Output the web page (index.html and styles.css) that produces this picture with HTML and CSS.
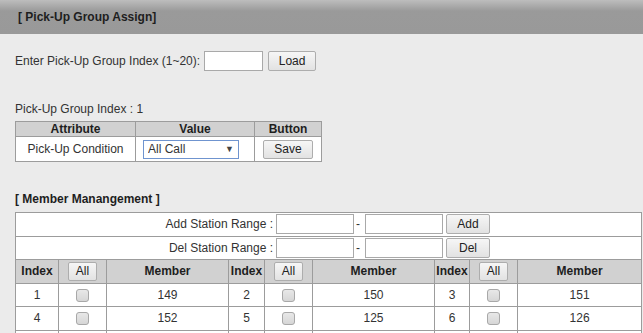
FILE: index.html
```html
<!DOCTYPE html>
<html lang="en">
<head>
    <meta charset="UTF-8">
    <title>Pick-Up Group Assign</title>
    <link rel="stylesheet" href="styles.css">
</head>
<body>
    <div class="title-bar">[ Pick-Up Group Assign]</div>

    <div class="content">
        <div class="load-row">
            <span>Enter Pick-Up Group Index (1~20):</span>
            <input type="text" class="index-input">
            <button class="btn load-btn">Load</button>
        </div>

        <div class="group-label">Pick-Up Group Index : 1</div>
        <table class="grid attr-table">
            <colgroup>
                <col style="width:120px">
                <col style="width:119px">
                <col style="width:67px">
            </colgroup>
            <tr>
                <th>Attribute</th>
                <th>Value</th>
                <th>Button</th>
            </tr>
            <tr>
                <td>Pick-Up Condition</td>
                <td>
                    <div class="select-wrap">
                        <select>
                            <option>All Call</option>
                            <option>Group Call</option>
                        </select>
                    </div>
                </td>
                <td><button class="btn save-btn">Save</button></td>
            </tr>
        </table>

        <div class="section-title">[ Member Manangement ]</div>
        <table class="grid member-table">
            <colgroup>
                <col style="width:43px">
                <col style="width:48px">
                <col style="width:122px">
                <col style="width:36px">
                <col style="width:48px">
                <col style="width:122px">
                <col style="width:35px">
                <col style="width:48px">
                <col style="width:124px">
            </colgroup>
            <tr>
                <td colspan="9" class="range-cell">
                    <div class="range-row">
                        <span class="range-label">Add Station Range :</span>
                        <input type="text" class="range-input">
                        <span class="dash">-</span>
                        <input type="text" class="range-input">
                        <button class="btn range-btn">Add</button>
                    </div>
                </td>
            </tr>
            <tr>
                <td colspan="9" class="range-cell">
                    <div class="range-row">
                        <span class="range-label">Del Station Range :</span>
                        <input type="text" class="range-input">
                        <span class="dash">-</span>
                        <input type="text" class="range-input">
                        <button class="btn range-btn">Del</button>
                    </div>
                </td>
            </tr>
            <tr>
                <th>Index</th>
                <th><button class="btn all-btn">All</button></th>
                <th>Member</th>
                <th>Index</th>
                <th><button class="btn all-btn">All</button></th>
                <th>Member</th>
                <th>Index</th>
                <th><button class="btn all-btn">All</button></th>
                <th>Member</th>
            </tr>
            <tr>
                <td>1</td>
                <td><input type="checkbox"></td>
                <td>149</td>
                <td>2</td>
                <td><input type="checkbox"></td>
                <td>150</td>
                <td>3</td>
                <td><input type="checkbox"></td>
                <td>151</td>
            </tr>
            <tr>
                <td>4</td>
                <td><input type="checkbox"></td>
                <td>152</td>
                <td>5</td>
                <td><input type="checkbox"></td>
                <td>125</td>
                <td>6</td>
                <td><input type="checkbox"></td>
                <td>126</td>
            </tr>
            <tr class="last-row">
                <td></td>
                <td></td>
                <td></td>
                <td></td>
                <td></td>
                <td></td>
                <td></td>
                <td></td>
                <td></td>
            </tr>
        </table>
    </div>
</body>
</html>
```

FILE: styles.css
```css
* {
    box-sizing: border-box;
    margin: 0;
    padding: 0;
}

body {
    font-family: 'Liberation Sans', Arial, sans-serif;
    font-size: 12px;
    background-color: #ebebeb;
    color: #333;
    overflow: hidden;
}

.title-bar {
    height: 34px;
    line-height: 34px;
    padding-left: 18px;
    font-weight: bold;
    color: #1e1e1e;
    background: linear-gradient(to bottom, #bdbdbd 0, #9a9a9a 11px, #999 100%);
}

.content {
    padding-left: 15px;
}

.load-row {
    display: flex;
    align-items: center;
    margin-top: 17px;
    height: 20px;
}

.index-input {
    width: 59px;
    height: 20px;
    margin-left: 4px;
    border: 1px solid #a9a9a9;
    background: #fff;
}

.btn {
    font-family: 'Liberation Sans', Arial, sans-serif;
    font-size: 12px;
    color: #222;
    border: 1px solid #adadad;
    border-radius: 2px;
    background: linear-gradient(to bottom, #f6f6f6, #e2e2e2);
}

.load-btn {
    width: 48px;
    height: 20px;
    margin-left: 5px;
}

.group-label {
    margin-top: 31px;
    height: 19px;
}

.grid {
    border-collapse: collapse;
    table-layout: fixed;
    background: #fff;
}

.grid th,
.grid td {
    border: 1px solid #9c9c9c;
    text-align: center;
    white-space: nowrap;
}

.grid th {
    background-color: #d1d1d1;
    color: #1e1e1e;
    font-weight: bold;
}

.attr-table {
    width: 307px;
}

.attr-table th {
    height: 15px;
    line-height: 14px;
}

.attr-table td {
    height: 25px;
}

.select-wrap {
    position: relative;
    width: 96px;
    height: 19px;
    margin-left: 7px;
}

.select-wrap select {
    appearance: none;
    width: 100%;
    height: 100%;
    border: 1px solid #6f94cf;
    background: #fff;
    font-family: 'Liberation Sans', Arial, sans-serif;
    font-size: 12px;
    color: #333;
    padding-left: 4px;
}

.select-wrap::after {
    content: "\25BC";
    position: absolute;
    right: 5px;
    top: 4px;
    font-size: 9px;
    color: #444;
    pointer-events: none;
}

.save-btn {
    width: 50px;
    height: 19px;
}

.section-title {
    margin-top: 30px;
    height: 20px;
    font-weight: bold;
    color: #1e1e1e;
}

.member-table {
    width: 627px;
}

.member-table td,
.member-table th {
    height: 23.5px;
}

.range-cell {
    padding: 0;
}

.range-row {
    display: flex;
    align-items: center;
}

.range-label {
    width: 257px;
    text-align: right;
}

.range-input {
    width: 78px;
    height: 20px;
    margin-left: 3px;
    border: 1px solid #a9a9a9;
    background: #fff;
}

.dash {
    width: 8px;
    text-align: center;
}

.range-btn {
    width: 44px;
    height: 20px;
    margin-left: 3px;
}

.all-btn {
    width: 29px;
    height: 19px;
    font-weight: normal;
}

.grid input[type="checkbox"] {
    appearance: none;
    width: 13px;
    height: 13px;
    vertical-align: middle;
    border: 1px solid #a8a8a8;
    border-radius: 3px;
    background: linear-gradient(to bottom, #e8e8e8, #d6d6d6);
}
```
